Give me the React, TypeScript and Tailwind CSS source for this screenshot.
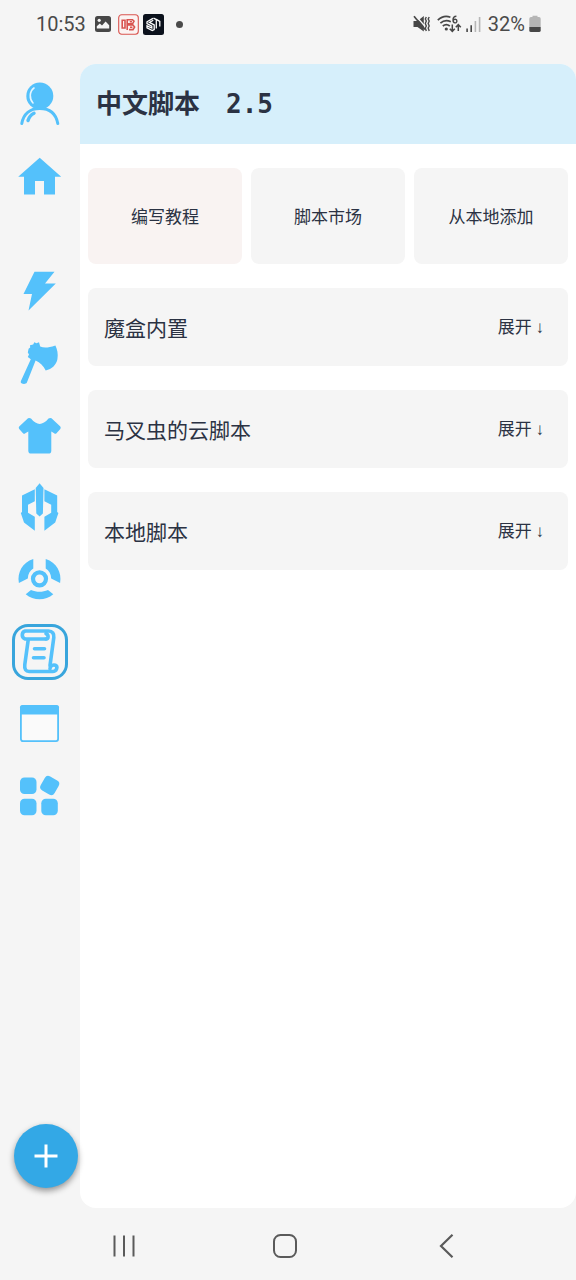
import React, { useState } from 'react';

type IconProps = { children: React.ReactNode };

const NavSvg = ({ children }: IconProps) => (
  <svg viewBox="0 0 56 56" className="w-14 h-14" fill="#54c1fb" aria-hidden="true">
    {children}
  </svg>
);

const UserIcon = () => (
  <NavSvg>
    <circle cx="27.8" cy="20" r="13.5" />
    <path d="M22 12C17.2 15.5 17.2 23 21 27" fill="none" stroke="#e6f6ff" strokeWidth="1.6" strokeLinecap="round" />
    <path d="M9.8 47.5C11.5 38 18 32.5 27.8 32.5S44 38 45.8 47.5" fill="none" stroke="#54c1fb" strokeWidth="3" strokeLinecap="round" />
    <path d="M16 44.5C17 41 19 38.7 22 37.2" fill="none" stroke="#54c1fb" strokeWidth="3.4" strokeLinecap="round" />
  </NavSvg>
);

const HomeIcon = () => (
  <NavSvg>
    <path d="M27.7 9.8 49.2 28.8H43V46.5H32V33H23V46.5H12V28.8H6.2Z" />
  </NavSvg>
);

const BoltIcon = () => (
  <NavSvg>
    <path d="M22.5 7.7H42.5L33 19.5H43.8L16.5 46.5 20 30H11.5Z" />
  </NavSvg>
);

const AxeIcon = () => (
  <NavSvg>
    <path d="M8.8 45.2 18.8 23.2 15.8 21 17 18.5 15.8 16.5 16.6 12.8 18.2 11.6 18 9.2 21.2 8.6 22.3 6.3 24.5 7.2 27 6.2 28.2 10.6C32 12 36 12 43.4 9.5C45.2 13 46.4 18 45.4 23.2C44.4 28.5 40 33.2 33.7 34.4C31.5 30 28 26.3 23.6 24.6L14.9 46.5C13.8 49 7.8 48 8.8 45.2Z" />
  </NavSvg>
);

const ShirtIcon = () => (
  <NavSvg>
    <path d="M16 10.3Q17.6 9.5 19 10.6C22 14.3 25 16 27.7 16S33.5 14.3 36.5 10.6Q38 9.5 39.5 10.3L48.3 18.6Q49.2 19.8 48.3 21L44.5 25.2Q43.3 26.2 42.2 25.2L39.3 23.6V42.7Q39.3 45.6 36.3 45.6H19.3Q16.3 45.6 16.3 42.7V23.6L13.3 25.2Q12.2 26.2 11 25.2L7.2 21Q6.2 19.8 7.2 18.6Z" />
  </NavSvg>
);

const HelmetIcon = () => (
  <NavSvg>
    <path d="M27.6 3.3 31.5 8 30.9 33.5 27.6 36.5 24.3 33.5 23.7 8Z" />
    <path d="M22.8 9.3 10 15.5V32L8.8 33 12 42.5 22.8 50.7V36.8L16 32.8V24.8L22.8 21.3Z" />
    <path d="M32.4 9.3 45.2 15.5V32L46.4 33 43.2 42.5 32.4 50.7V36.8L39.2 32.8V24.8L32.4 21.3Z" />
  </NavSvg>
);

const WheelIcon = () => (
  <NavSvg>
    <circle cx="27.5" cy="26.8" r="6.5" fill="none" stroke="#54c1fb" strokeWidth="4.2" />
    <path d="M21.3 7V16.5C18 18.5 16 22 15.8 26.5L6.9 31C5 20.5 10.5 10.3 21.3 7Z" />
    <path d="M33.7 7V16.5C37 18.5 39 22 39.2 26.5L48.1 31C50 20.5 44.5 10.3 33.7 7Z" />
    <path d="M13.7 42.3 19 38C24.5 40.4 30.5 40.4 36 38L41.3 42.3C33.5 48.9 21.5 48.9 13.7 42.3Z" />
  </NavSvg>
);

const ScrollIcon = () => (
  <NavSvg>
    <g fill="none" stroke="#54c1fb" strokeWidth="3.6" strokeLinecap="round" strokeLinejoin="round">
      <path d="M34 15H13.2A4.2 4.2 0 0 1 13.2 7H36.5C40.5 7 42.2 10 41.8 13.5L38 41.5" />
      <path d="M34 15C36.8 15 36.8 10.8 34 9.5" />
      <path d="M16.2 16 12.8 40.5C12.2 45.5 14 47.5 17 47.5H40.5C44.8 47.3 46.2 42.5 43.3 41.2C41 40.3 38.3 42 38 44.5" />
      <path d="M22.5 24.7H32.5M21.5 33.8H32" />
    </g>
  </NavSvg>
);

const WindowIcon = () => (
  <NavSvg>
    <rect x="8.9" y="9.9" width="37.2" height="35.2" rx="2" fill="#fafafa" stroke="#54c1fb" strokeWidth="1.8" />
    <path d="M8 18.4V11.5Q8 9.2 10.5 9.2H44.5Q47 9.2 47 11.5V18.4Z" />
  </NavSvg>
);

const AppsIcon = () => (
  <NavSvg>
    <rect x="8" y="9.5" width="16.5" height="16.5" rx="4.5" />
    <rect x="29.7" y="9.5" width="16" height="16" rx="4" transform="rotate(30 37.7 17.5)" />
    <rect x="8" y="30.8" width="16.5" height="16.5" rx="4.5" />
    <rect x="29.3" y="30.8" width="16.5" height="16.5" rx="4.5" />
  </NavSvg>
);

const topNav = [
  { id: 'user', label: '用户', Icon: UserIcon },
  { id: 'home', label: '主页', Icon: HomeIcon },
];

const toolNav = [
  { id: 'bolt', label: '闪电', Icon: BoltIcon },
  { id: 'axe', label: '工具', Icon: AxeIcon },
  { id: 'shirt', label: '服装', Icon: ShirtIcon },
  { id: 'helmet', label: '头盔', Icon: HelmetIcon },
  { id: 'wheel', label: '控制', Icon: WheelIcon },
  { id: 'script', label: '脚本', Icon: ScrollIcon },
  { id: 'window', label: '窗口', Icon: WindowIcon },
  { id: 'apps', label: '应用', Icon: AppsIcon },
];

const actions = [
  { label: '编写教程', color: 'bg-[#f9f3f2]' },
  { label: '脚本市场', color: 'bg-[#f5f5f5]' },
  { label: '从本地添加', color: 'bg-[#f5f5f5]' },
];

const sections = ['魔盒内置', '马叉虫的云脚本', '本地脚本'];

function StatusBar() {
  return (
    <header className="flex items-center justify-between h-12 pl-9 pr-[35px] font-['Roboto',sans-serif] text-xl text-[#4a4a4a]">
      <div className="flex items-center">
        <span>10:53</span>
        <svg viewBox="0 0 18 18" className="w-[18px] h-[18px] ml-2" aria-hidden="true">
          <rect x="1" y="1" width="16" height="16" rx="2.5" fill="#474747" />
          <circle cx="5.2" cy="5.3" r="1.6" fill="#f5f5f5" />
          <path d="M2.8 13.5V11.3L5.8 8.6 8 10.6 11.6 6.4 15.2 10.3V13.5Z" fill="#f5f5f5" />
        </svg>
        <svg viewBox="0 0 21 21" className="w-[21px] h-[21px] ml-1.5" fill="none" stroke="#d9544f" aria-hidden="true">
          <rect x="0.7" y="0.7" width="19.6" height="19.6" rx="3" fill="#fbf3f2" strokeWidth="1.1" />
          <path d="M4.2 6.3H7V14H4.2ZM9.2 5V16M9.2 5.7H14.5L16 7.2 14.6 9.8H9.5M11.8 7.8H14M9.5 11H15L16.6 13 15 15.6H11M12 13.3H14.4" strokeWidth="1.6" />
        </svg>
        <svg viewBox="0 0 21 21" className="w-[21px] h-[21px] ml-1" aria-hidden="true">
          <rect width="21" height="21" rx="2.5" fill="#0b111c" />
          <path d="M10 4.4 4 7.8V9.7L8.8 12.2V14L4 11.8V13.8L9.3 16.6 11.2 15.6V11L6.4 8.4 10.3 6.2M13.3 5V14.6M13.3 5.4 16.8 7.4V12.5M10.5 4.2 15 6.4" fill="none" stroke="#fff" strokeWidth="1.3" />
        </svg>
        <span className="w-[7px] h-[7px] ml-3 rounded-full bg-[#4a4a4a]" />
      </div>

      <div className="flex items-center">
        <svg viewBox="0 0 18 18" className="w-[18px] h-[18px]" aria-hidden="true">
          <path d="M0.5 6H4.5L10.8 1V16.5L4.5 12H0.5Z" fill="#474747" />
          <path d="M2.5 0.5 13 12.5" stroke="#f5f5f5" strokeWidth="1.4" />
          <path d="M1 1.2 12 14.5" stroke="#474747" strokeWidth="1.7" />
          <path d="M13.3 2 12.3 4 13.3 6 12.3 8.5 13.3 11 12.3 13 13.3 16M16.2 2 15.2 4 16.2 6 15.2 8.5 16.2 11 15.2 13 16.2 16" fill="none" stroke="#474747" strokeWidth="1.4" />
        </svg>
        <svg viewBox="0 0 25 18" className="w-[25px] h-[18px] ml-1.5" fill="none" stroke="#474747" aria-hidden="true">
          <path d="M0.8 5.2C4.8 1.3 9 0.6 13.4 2.2M3.4 8.2C6.5 5.3 10 4.8 13.8 6.7M5.8 11C8 9.2 10.4 9.1 12.8 11" strokeWidth="1.7" />
          <circle cx="9.3" cy="14" r="1.6" fill="#474747" stroke="none" />
          <path d="M19.4 1.2C16.8 1.2 16 3 16 5C16 8.6 19.9 8.6 19.9 6.1C19.9 3.8 16.8 3.7 16.2 5.5" strokeWidth="1.4" />
          <path d="M15.3 9.5V16M12.8 13.7 15.3 16.3 17.8 13.7M21.3 16V10M18.8 12.3 21.3 9.7 23.8 12.3" strokeWidth="1.5" />
        </svg>
        <svg viewBox="0 0 15 16" className="w-[15px] h-4 ml-1" aria-hidden="true">
          <path d="M0.3 12.5H1.9V16H0.3ZM4.4 9.3H6V16H4.4Z" fill="#474747" />
          <path d="M8.6 5H10.2V16H8.6ZM12.8 1H14.4V16H12.8Z" fill="#b7b7b7" />
        </svg>
        <span className="ml-[7px]">32%</span>
        <svg viewBox="0 0 12 18" className="w-3 h-[18px] ml-1" aria-hidden="true">
          <path d="M3.5 2V0.8H8.5V2H10Q11.7 2 11.7 3.7V12H0.3V3.7Q0.3 2 2 2Z" fill="#b5b5b5" />
          <path d="M0.3 12H11.7V15.5Q11.7 17 10 17H2Q0.3 17 0.3 15.5Z" fill="#474747" />
        </svg>
      </div>
    </header>
  );
}

export default function App() {
  const [active, setActive] = useState('script');

  const renderNav = ({ id, label, Icon }: (typeof topNav)[number]) => (
    <button
      key={id}
      type="button"
      aria-label={label}
      onClick={() => setActive(id)}
      className={`w-14 h-14 rounded-2xl ${active === id ? 'ring-3 ring-inset ring-[#38a5dc]' : ''}`}
    >
      <Icon />
    </button>
  );

  return (
    <div className="flex flex-col min-h-screen bg-[#f5f5f5] text-[#2b3243] font-['Noto_Sans_CJK_SC',sans-serif]">
      <StatusBar />

      <div className="flex flex-1 pt-4">
        <aside className="relative w-20 shrink-0 pt-3 pb-24">
          <nav className="flex flex-col items-center gap-[60px]">
            <div className="flex flex-col gap-4">{topNav.map(renderNav)}</div>
            <div className="flex flex-col gap-4">{toolNav.map(renderNav)}</div>
          </nav>
          <button
            type="button"
            aria-label="添加"
            className="absolute bottom-5 left-3.5 flex items-center justify-center w-16 h-16 rounded-full bg-[#33a8e6] shadow-[0_3px_6px_rgba(0,0,0,0.4)]"
          >
            <svg viewBox="0 0 24 24" className="w-6 h-6" stroke="#fff" strokeWidth="3" aria-hidden="true">
              <path d="M12 0.5V23.5M0.5 12H23.5" />
            </svg>
          </button>
        </aside>

        <main className="flex-1 bg-white rounded-2xl overflow-hidden">
          <div className="flex items-center h-20 px-4 bg-[#d6effb]">
            <h1 className="text-[26px] leading-8 font-bold whitespace-pre font-['DejaVu_Sans_Mono','Noto_Sans_CJK_SC',monospace]">
              中文脚本　2.5
            </h1>
          </div>

          <div className="flex flex-col gap-6 px-2 py-6">
            <div className="grid grid-cols-3 gap-[9px]">
              {actions.map(({ label, color }) => (
                <button key={label} type="button" className={`h-24 rounded-lg text-[17px] leading-6 ${color}`}>
                  {label}
                </button>
              ))}
            </div>

            {sections.map((title) => (
              <button
                key={title}
                type="button"
                className="flex items-center justify-between h-[78px] pl-4 pr-6 rounded-lg bg-[#f5f5f5]"
              >
                <span className="text-[21px] leading-8">{title}</span>
                <span className="text-[17px] leading-6">
                  展开 <span className="font-['Liberation_Sans',sans-serif]">↓</span>
                </span>
              </button>
            ))}
          </div>
        </main>
      </div>

      <footer className="flex items-center justify-around h-[72px] pt-1 pl-[43px] pr-12">
        <button type="button" aria-label="最近任务">
          <svg viewBox="0 0 24 24" className="w-6 h-6" stroke="#5a5a5a" strokeWidth="2" aria-hidden="true">
            <path d="M2.5 1.5V22.5M12 1.5V22.5M21.5 1.5V22.5" />
          </svg>
        </button>
        <button type="button" aria-label="主屏幕">
          <svg viewBox="0 0 24 24" className="w-6 h-6" fill="none" stroke="#5a5a5a" strokeWidth="2" aria-hidden="true">
            <rect x="1" y="1" width="22" height="22" rx="6.5" />
          </svg>
        </button>
        <button type="button" aria-label="返回">
          <svg viewBox="0 0 24 24" className="w-6 h-6" fill="none" stroke="#5a5a5a" strokeWidth="2.2" aria-hidden="true">
            <path d="M17.5 0.8 6 12 17.5 23.2" />
          </svg>
        </button>
      </footer>
    </div>
  );
}
